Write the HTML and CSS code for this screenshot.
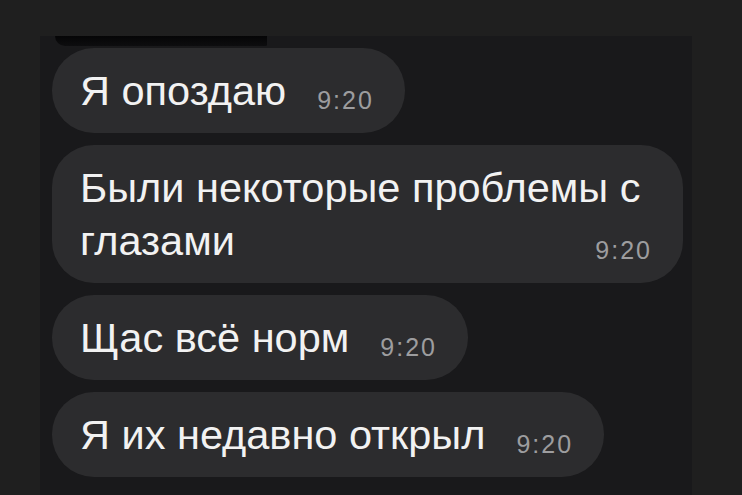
FILE: index.html
```html
<!DOCTYPE html>
<html>

<head>
    <meta charset="utf-8">
    <title>chat</title>
    <link rel="stylesheet" href="styles.css">
</head>

<body>
    <div class="chat">
        <div class="prev"></div>
        <div class="list">
            <div class="msg">Я опоздаю<span class="time">9:20</span></div>
            <div class="msg">Были некоторые проблемы с глазами<span class="time">9:20</span></div>
            <div class="msg">Щас всё норм<span class="time">9:20</span></div>
            <div class="msg">Я их недавно открыл<span class="time">9:20</span></div>
        </div>
    </div>
</body>

</html>
```

FILE: styles.css
```css
body {
    margin: 0;
    background-color: #1f1f1f;
    font-family: "Liberation Sans", Arial, sans-serif;
    height: 495px;
    overflow: hidden;
}

.chat {
    margin: 36px 0 0 40px;
    width: 652px;
    height: 459px;
    background-color: #19191b;
    padding: 0 0 0 12px;
    box-sizing: border-box;
}

.prev {
    margin-left: 3px;
    width: 212px;
    height: 10px;
    background: linear-gradient(#050506, #0d0d0f);
    border-radius: 0 0 4px 30px;
}

.list {
    display: flex;
    flex-direction: column;
    align-items: flex-start;
    gap: 12px;
    padding-top: 2px;
}

.msg {
    max-width: 631px;
    box-sizing: border-box;
    background-color: #2c2c2e;
    color: #f2f2f2;
    font-size: 41.5px;
    line-height: 53px;
    padding: 16px 31px 16px 28px;
    border-radius: 42px;
}

.time {
    float: right;
    margin: 19px 0 0 31px;
    font-size: 25px;
    line-height: 34px;
    letter-spacing: 2px;
    color: #9d9d9f;
}
```
